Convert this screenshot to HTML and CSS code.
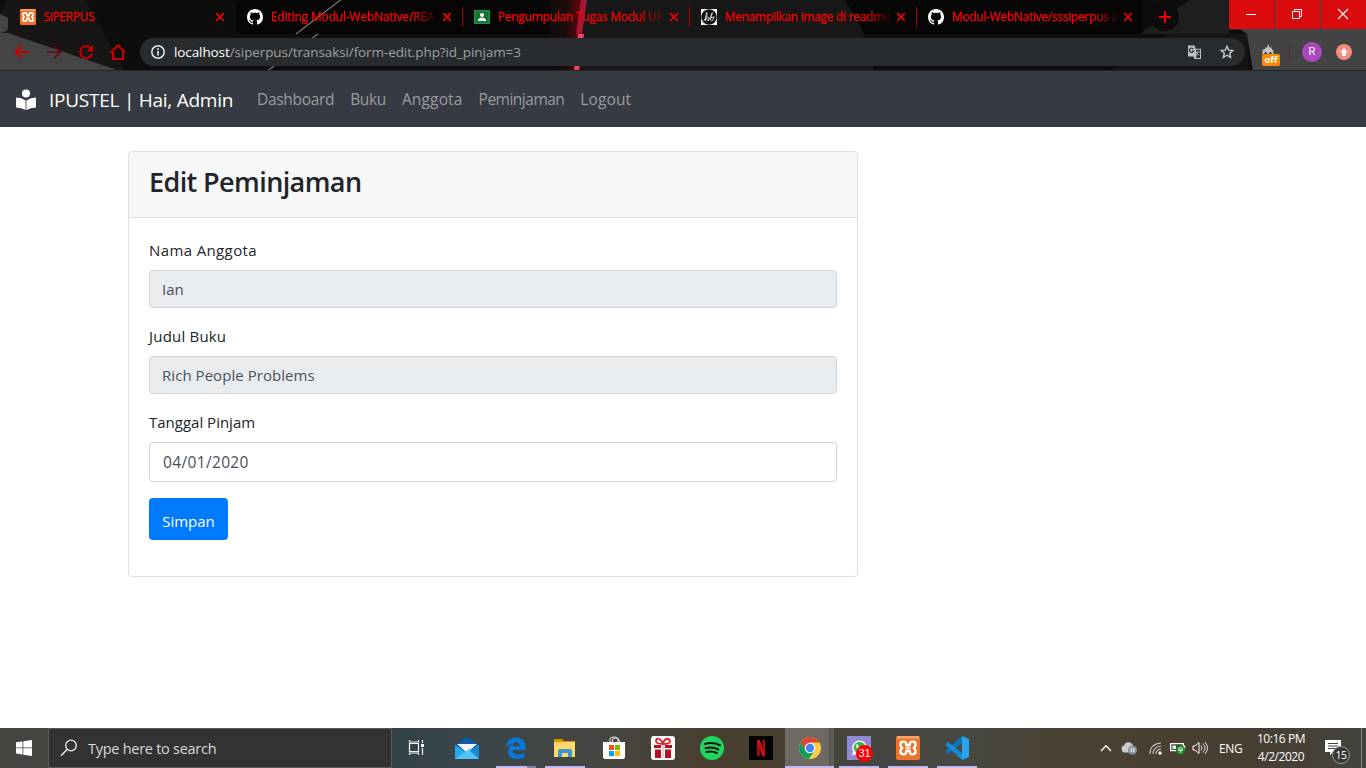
FILE: index.html
```html
<!DOCTYPE html>
<html lang="id">
<head>
<meta charset="utf-8">
<title>SiPERPUS</title>
<link rel="stylesheet" href="styles.css">
</head>
<body>
<svg class="defs" width="0" height="0">
  <defs>
    <symbol id="github" viewBox="0 0 16 16"><path fill="#fff" d="M8 0C3.58 0 0 3.58 0 8c0 3.54 2.29 6.53 5.47 7.59.4.07.55-.17.55-.38 0-.19-.01-.82-.01-1.49-2.01.37-2.53-.49-2.69-.94-.09-.23-.48-.94-.82-1.13-.28-.15-.68-.52-.01-.53.63-.01 1.08.58 1.23.82.72 1.21 1.87.87 2.33.66.07-.52.28-.87.51-1.07-1.78-.2-3.64-.89-3.64-3.95 0-.87.31-1.59.82-2.15-.08-.2-.36-1.02.08-2.12 0 0 .67-.21 2.2.82.64-.18 1.32-.27 2-.27s1.36.09 2 .27c1.53-1.04 2.2-.82 2.2-.82.44 1.1.16 1.92.08 2.12.51.56.82 1.27.82 2.15 0 3.07-1.87 3.75-3.65 3.95.29.25.54.73.54 1.48 0 1.07-.01 1.93-.01 2.2 0 .21.15.46.55.38A8.01 8.01 0 0 0 16 8c0-4.42-3.58-8-8-8z"/></symbol>
    <symbol id="xampp" viewBox="0 0 24 24"><rect width="24" height="24" rx="2" fill="#ed742a"/><path d="M1 0h22v2.500H1z" fill="#f7a46b"/><path d="M10.300 9.300H13.700V8.200Q13.700 5.800 16.200 5.800H17Q19.600 5.800 19.600 8.400 19.600 11 17.600 12 19.600 13 19.600 15.600 19.600 18.200 17 18.200H16.200Q13.700 18.200 13.700 15.800V14.700H10.300V15.800Q10.300 18.200 7.800 18.200H7Q4.400 18.200 4.400 15.600 4.400 13 6.400 12 4.400 11 4.400 8.400 4.400 5.800 7 5.800H7.800Q10.300 5.800 10.300 8.200z" fill="none" stroke="#fff" stroke-width="2.400" stroke-linejoin="round"/><path d="M9.500 12h5" stroke="#fff" stroke-width="1.600"/></symbol>
    <symbol id="cross" viewBox="0 0 10 10"><path d="M1.200 1.200l7.600 7.600M8.800 1.200L1.200 8.800" stroke="#f00000" stroke-width="1.700"/></symbol>
    <linearGradient id="beam"><stop offset="0" stop-color="#800" stop-opacity="0"/><stop offset=".55" stop-color="#800" stop-opacity=".12"/><stop offset="1" stop-color="#a00010" stop-opacity=".65"/></linearGradient>
  </defs>
</svg>

<header class="browser">
  <svg class="browser-art" width="1366" height="71" viewBox="0 0 1366 71">
    <path fill="#0d0d0d" d="M0 0h1366v71H0z"/>
    <path fill="#171614" d="M8 0H85L125 71H0V15z"/>
    <path fill="#050505" d="M236 8q0-8 8-8H550V34H244q-8 0-8-8z"/>
    <path fill="#171717" d="M586 0h268l20 71H578z"/>
    <path fill="#060606" d="M845 0h295q3 0 3 6v28H865z"/>
    <path fill="#282828" d="M1208 0h158v30H1143l5 3z"/>
    <path fill="#1e1e1e" d="M1190 0h39v34h-89z"/>
    <path fill="#151515" d="M1170 34h78v37H1110z"/>
    <path fill="#434343" d="M1229 0H1366V71H1253L1247 34 1240 29z"/>
    <path fill="#444" d="M0 14l8 4v10q0 4-8 5zM0 33h8l112 38H0z"/>
    <path d="M343-2L296 34M318 34L267 71" stroke="#777" stroke-width="1.200"/>
    <path fill="url(#beam)" d="M545 0h37l-5 71h-32z"/>
    <path fill="#a71632" d="M581 0h6l-5 34h-6z"/>
    <path fill="#f04663" d="M578 34h6l-5 37h-5z"/>
    <path d="M0 70.500H1366" stroke="#222326"/>
  </svg>

  <div class="tabstrip">
    <div class="tab"><svg class="fav"><use href="#xampp"/></svg><span class="tab-title t1">SiPERPUS</span><svg class="tab-close"><use href="#cross"/></svg></div>
    <div class="tab"><svg class="fav"><use href="#github"/></svg><span class="tab-title t2">Editing Modul-WebNative/REA</span><svg class="tab-close"><use href="#cross"/></svg></div>
    <div class="tab ruled"><svg class="fav" viewBox="0 0 16 16"><path fill="#1e8e3e" d="M0 1h16v14H0z"/><path fill="#137333" d="M1.500 2.500h13v11h-13z"/><circle cx="8" cy="6" r="2" fill="#fff"/><path fill="#fff" d="M4 12v-1.500q2-2 4-2t4 2V12z"/></svg><span class="tab-title t3">Pengumpulan Tugas Modul UK</span><svg class="tab-close"><use href="#cross"/></svg></div>
    <div class="tab ruled"><svg class="fav" viewBox="0 0 16 16"><path fill="#fff" d="M0 0h16v16H0z"/><circle cx="8" cy="8" r="7.800" fill="#111"/><path d="M2.500 12Q7 6 6 3.500 5 3 4.500 12 6.500 6 7.500 8.500L7 12Q10 8 11.500 4 10.500 2 9.500 11 10 13 12 11 13.500 8 10 8.500L14 8" fill="none" stroke="#ddd" stroke-width=".9"/></svg><span class="tab-title t4">Menampilkan image di readme</span><svg class="tab-close"><use href="#cross"/></svg></div>
    <div class="tab ruled"><svg class="fav"><use href="#github"/></svg><span class="tab-title t5">Modul-WebNative/sssiperpus a</span><svg class="tab-close"><use href="#cross"/></svg></div>
    <div class="new-tab"><svg width="12" height="12"><path d="M6 0v12M0 6h12" stroke="#f00000" stroke-width="2"/></svg></div>
    <div class="window-controls">
      <span><svg width="12" height="12"><path d="M1 6.500h10" stroke="#fff"/></svg></span>
      <span><svg width="12" height="12"><path d="M1.500 3.500h7v7h-7zM3.500 3.500v-2h7v7h-2" fill="none" stroke="#fff"/></svg></span>
      <span><svg width="12" height="12"><path d="M1 1l10 10M11 1L1 11" stroke="#fff" stroke-width="1.100"/></svg></span>
    </div>
  </div>

  <div class="toolbar">
    <svg width="16" height="16"><path d="M15 8H2M8 1.500L1.500 8 8 14.500" fill="none" stroke="#c80000" stroke-width="2"/></svg>
    <svg width="16" height="16"><path d="M1 8h13M8 1.500L14.500 8 8 14.500" fill="none" stroke="#650909" stroke-width="1.700"/></svg>
    <svg width="16" height="16"><path d="M12.800 4.200A6 6 0 1 0 14 9.800" fill="none" stroke="#c80000" stroke-width="2"/><path d="M15 1v6.500H8.500z" fill="#c80000"/></svg>
    <svg width="16" height="16"><path d="M.8 8.500L8 1.500l7.200 7M3 7.500V15h10V7.500" fill="none" stroke="#c80000" stroke-width="2"/></svg>
    <div class="address">
      <svg width="14" height="14"><circle cx="7" cy="7" r="6.200" fill="none" stroke="#e8eaed" stroke-width="1.500"/><path d="M7 6v4.500M7 3.300v1.600" stroke="#e8eaed" stroke-width="1.600"/></svg>
      <span class="url"><b>localhost</b>/siperpus/transaksi/form-edit.php?id_pinjam=3</span>
      <svg class="translate" width="15" height="15"><path fill="#bdc1c6" d="M1 .5h6.500l1.200 3.200H14V14H7.500L6.400 11.500H1z"/><path fill="#292c2f" d="M8.900 4.800H13v8.100H9.600l-1-1.400h1.200z"/><path d="M6.400 4A2.200 2.200 0 1 0 6.600 6H4.800" fill="none" stroke="#292c2f" stroke-width="1.200"/><path d="M9.200 7h3.500M11 6v1Q10.800 9 9.300 10M9.500 7.500l2.800 3.300" fill="none" stroke="#bdc1c6" stroke-width=".8"/></svg>
      <svg class="star" width="14" height="14"><path d="M7 1.300l1.700 3.800 4.100.4-3.100 2.700.9 4.100L7 10.200l-3.600 2.100.9-4.100L1.200 5.500l4.100-.4z" fill="none" stroke="#c8cbd0" stroke-width="1.400"/></svg>
    </div>
    <div class="extension"><svg width="14" height="14"><path fill="#c3c3c3" d="M1 10l1-3-1-1 3-1 .5-2L6 4l1-4 2 4 1.500-1L11 6l2 .5-1 1.500 1 2z"/><path d="M3 10l1.500-2.500L6.500 10m1 0l2-2.500L11 10" fill="#333"/></svg><span class="ext-badge">off</span></div>
    <i class="toolbar-rule"></i>
    <span class="avatar">R</span>
    <svg class="update" width="16" height="16"><circle cx="8" cy="8" r="8" fill="#f28b82"/><path fill="#fff" d="M8 4l4 4.300H9.800V12H6.200V8.300H4z"/></svg>
  </div>
</header>

<nav class="navbar">
  <svg class="brand-icon" width="22" height="22" viewBox="0 0 22 22"><circle cx="11" cy="4.500" r="4" fill="#fff"/><path fill="#fff" d="M1 8.500q5.500.2 9.600 3v9.600Q6.500 18.700 1 18.500zM21 8.500q-5.500.2-9.600 3v9.600q4.100-2.400 9.600-2.600z"/></svg>
  <span class="brand">IPUSTEL | Hai, Admin</span>
  <span class="link n1">Dashboard</span><span class="link n2">Buku</span><span class="link n3">Anggota</span><span class="link n4">Peminjaman</span><span class="link n5">Logout</span>
</nav>

<main class="page">
  <section class="card">
    <div class="card-header"><h3>Edit Peminjaman</h3></div>
    <form class="card-body">
      <label class="l1">Nama Anggota</label>
      <div class="control disabled">Ian</div>
      <label class="l2">Judul Buku</label>
      <div class="control disabled">Rich People Problems</div>
      <label class="l3">Tanggal Pinjam</label>
      <div class="control date">04/01/2020</div>
      <button type="button" class="save">Simpan</button>
    </form>
  </section>
</main>

<footer class="taskbar">
  <div class="start"><svg width="16" height="16"><path fill="#fff" d="M0 2.300l6.500-.9v6.100H0zM7.300 1.300L16 0v7.500H7.300zM0 8.300h6.500v6.200L0 13.600zM7.300 8.300H16V16l-8.700-1.300z"/></svg></div>
  <div class="search"><svg width="18" height="18"><circle cx="11" cy="6.500" r="5.300" fill="none" stroke="#eee" stroke-width="1.300"/><path d="M7.300 10.300L1 16.700" stroke="#eee" stroke-width="1.400"/></svg><span>Type here to search</span></div>
  <div class="apps">
    <div class="app task-view"><svg width="18" height="18"><path d="M2.500 4.500h9v8h-9zM2.500 1v2h9V1M2.500 16v-2h9v2M15.500 1v3M15.500 9v7" fill="none" stroke="#f5f5f5" stroke-width="1.200"/><path fill="#fff" d="M14 5h3v3h-3z"/></svg></div>
    <div class="app"><svg width="24" height="24"><path fill="#0b5ba9" d="M0 9L12 1l12 8-3 8H3z"/><path fill="#f3f3f3" d="M2 8h20L12 17z"/><path fill="#28a8ea" d="M0 9l12 8 12-8v14H0z"/><path fill="#50c5fa" d="M0 23L15 12.500 24 23z"/><path fill="#1789d6" d="M24 9l-9 6 9 8z"/></svg></div>
    <div class="app open edge"><svg width="22" height="24" viewBox="0 0 22 24"><path fill="#0a78d6" d="M1 11Q2 1.500 11.500 1.500 20.500 1.500 20.500 11.500V14H7.500Q8 18.500 13 18.500q3.500 0 6.500-1.800v4.500Q16 23 12 23 3 23 3 15.500 3 10 8.500 7.500 5 7.800 1 11zm6.500-.8h7Q14.500 6 11.200 6 8 6 7.500 10.200z"/></svg></div>
    <div class="app open"><svg width="22" height="22"><path fill="#d99600" d="M0 2h8l2 2h11v4H0z"/><path fill="#ffd766" d="M0 5h21v15H0z"/><path fill="#3f95d8" d="M4 20v-6q0-2 2-2h10q2 0 2 2v6h-4v-4H8v4z"/></svg></div>
    <div class="app"><svg width="24" height="24"><path d="M8 6V4q0-3 4-3t4 3v2M10.500 6V4q0-2 3-2t4 3v1" fill="none" stroke="#ddd" stroke-width="1.100"/><path fill="#fff" d="M1 6h22v15q0 2-2 2H3q-2 0-2-2z"/><path fill="#f25022" d="M7 9h5v5H7z"/><path fill="#7fba00" d="M13 9h5v5h-5z"/><path fill="#00a4ef" d="M7 15h5v5H7z"/><path fill="#ffb900" d="M13 15h5v5h-5z"/></svg></div>
    <div class="app"><svg width="24" height="24"><rect width="24" height="24" rx="3" fill="#fff"/><path d="M12 8Q5 8 5 5t3-2q3 1 4 5Q13 3 16 3q3 0 3 2.500T12 8z" fill="none" stroke="#e0202b" stroke-width="1.800"/><path fill="#b80f20" d="M3 9h7v3H3zM14 9h7v3h-7zM4 13.500h6V22H4zM14 13.500h6V22h-6z"/><path fill="#d8d8d8" d="M11 9h2v13h-2z"/></svg></div>
    <div class="app"><svg width="24" height="24"><circle cx="12" cy="12" r="12" fill="#1ed760"/><path d="M5 8q8-2.400 15 1.300M5.600 12.200q7-2 12.600 1.200M6.300 16q5.500-1.500 10.500 1" fill="none" stroke="#111" stroke-width="2.100" stroke-linecap="round"/></svg></div>
    <div class="app"><svg width="24" height="24"><path d="M0 0h24v24H0z"/><path fill="#a70b14" d="M8 4h2.800v16L8 20.300zM13.500 4H16v16.300l-2.500-.3z"/><path fill="#e50914" d="M8 4h2.800L16 20.300l-2.700-.3z"/></svg></div>
    <div class="app open active"><svg width="22" height="22" viewBox="0 0 22 22"><circle cx="11" cy="11" r="11" fill="#ffcd41"/><path fill="#db4437" d="M1.500 5.500A11 11 0 0 1 20.500 5.500H11L6.200 13.500z"/><path fill="#109d59" d="M1.500 5.500A11 11 0 0 0 9.700 21.900L15.500 14 8 15.500z"/><circle cx="11" cy="11" r="5.300" fill="#fff"/><circle cx="11" cy="11" r="4.200" fill="#4285f4"/></svg></div>
    <div class="app open whatsapp"><svg width="24" height="24"><path fill="#908ad5" d="M0 0h24v24H0z"/><path fill="#f5f5f5" d="M5 19.500l1-4.300a7.300 7.300 0 1 1 3 3z"/><circle cx="12.500" cy="11.500" r="5.700" fill="#35b747"/><path d="M10 8.500q0 5 5.500 6" stroke="#fff" stroke-width="2" fill="none"/></svg><span class="count">31</span></div>
    <div class="app open"><svg width="24" height="24"><use href="#xampp"/></svg></div>
    <div class="app open"><svg width="24" height="24"><path fill="#0879bf" d="M0 15.500L17 0v7L3 18z"/><path fill="#168ed5" d="M0 8.500L3 6l14 11v7z"/><path fill="#29a4ef" d="M17 0l7 3v18l-7 3z"/></svg></div>
  </div>
  <div class="tray">
    <svg width="12" height="8"><path d="M1 7l5-5.300L11 7" fill="none" stroke="#fff" stroke-width="1.300"/></svg>
    <svg class="cloud" width="16" height="14"><path fill="#ccc" d="M1 9Q-.5 5 3 4.500 5 0 9 1.500q3 1 3 4l2 4-5 2H3Q1 11 1 9z"/><circle cx="11.500" cy="9" r="4.500" fill="#8b94a3"/><path d="M10.200 7v4M12.800 7v4" stroke="#fff"/></svg>
    <svg class="wifi" width="13" height="13"><path d="M1 12Q1 2 12 1M4 12q0-7 8-8M7 12q0-4.500 5-5" fill="none" stroke="#ccc" stroke-width="1.100"/><circle cx="11" cy="11" r="1.700" fill="#fff"/></svg>
    <svg class="battery" width="16" height="14"><path d="M.7 2.700h12.600v7H.7zM14.500 4.500v3.500" fill="none" stroke="#fff" stroke-width="1.300"/><path fill="#eee" d="M2.500 4.500H6V8H2.500z"/><circle cx="10.500" cy="9" r="4.700" fill="#138a28"/><path d="M10.500 12V8.500M8.700 9.500Q8 6.500 10.500 6.500t1.800 3z" fill="none" stroke="#fff"/></svg>
    <svg class="sound" width="17" height="14"><path d="M1 5h2l4-3.500v11L3 9H1z" fill="none" stroke="#fff"/><path d="M9 4.500q2 2.500 0 5M11 2.500q4 4.500 0 9M13 1q5 6 0 12" fill="none" stroke="#ddd"/></svg>
    <span class="lang">ENG</span>
    <div class="clock"><span class="time">10:16 PM</span><span class="day">4/2/2020</span></div>
    <div class="notify"><svg width="17" height="16"><path fill="#fff" d="M0 0h16v12H8l-3 3v-3H0z"/><path d="M3 3.500h10M3 6h10M3 8.500h7" stroke="#444"/></svg><span class="notify-count">15</span></div>
    <i class="desktop-edge"></i>
  </div>
</footer>
</body>
</html>
```

FILE: styles.css
```css
* { box-sizing: border-box; }
body { margin: 0; width: 1366px; height: 768px; display: flex; flex-direction: column; overflow: hidden; background: #fff; font-family: "Open Sans", "Noto Sans", sans-serif; }
.defs { position: absolute; }
svg { flex: none; display: block; }

/* browser frame */
.browser { position: relative; height: 71px; flex: none; }
.browser-art { position: absolute; inset: 0; }
.tabstrip { position: relative; height: 34px; display: flex; padding-left: 8px; }
.tab { width: 227px; flex: none; display: flex; align-items: center; padding: 0 10px 0 12px; }
.ruled { background: linear-gradient(#a00, #a00) left center / 1px 20px no-repeat; }
.fav { width: 16px; height: 16px; }
.tab-title { flex: 1; min-width: 0; margin-left: 8px; white-space: nowrap; color: #ff0000; font-size: 12px; line-height: 18px; -webkit-text-stroke: .3px #ff0000; -webkit-mask-image: linear-gradient(90deg, #000 142px, transparent 168px); mask-image: linear-gradient(90deg, #000 142px, transparent 168px); }
.t1 { letter-spacing: -.35px; }
.t2 { letter-spacing: -.17px; }
.t3 { letter-spacing: -.25px; }
.t4 { letter-spacing: -.3px; }
.t5 { letter-spacing: -.3px; }
.tab-close { width: 10px; height: 10px; margin-left: 6px; }
.new-tab { width: 28px; height: 28px; margin: 3px 0 0 8px; border-radius: 50%; background: #0b0b0b; display: flex; align-items: center; justify-content: center; }
.window-controls { display: flex; gap: 1px; margin-left: auto; height: 29px; }
.window-controls span { width: 45px; padding: 0 1px 1px 0; background: #da0b0d; display: flex; align-items: center; justify-content: center; }
.toolbar { position: relative; height: 36px; padding-left: 14px; display: flex; align-items: center; gap: 16px; }
.address { width: 1105px; height: 28px; margin-left: -2px; padding: 0 11px; border-radius: 14px; background: #292c2f; display: flex; align-items: center; }
.url { margin-left: 9px; color: #9aa0a6; font-size: 13.500px; letter-spacing: -.1px; white-space: nowrap; }
.url b { font-weight: 400; color: #fff; }
.translate { margin-left: auto; }
.star { margin-left: 18px; }
.extension { position: relative; width: 20px; height: 26px; margin-left: -1px; display: flex; justify-content: center; }
.extension svg { margin: 5px 4px 0 0; }
.ext-badge { position: absolute; left: 2px; bottom: -1px; width: 18px; height: 12px; border-radius: 2px; background: #ff8a00; color: #fff; font: 700 9.500px/12px "Open Sans", sans-serif; text-align: center; }
.toolbar-rule { width: 1px; height: 16px; background: #5a2c2c; margin-left: -7px; }
.avatar { width: 20px; height: 20px; border-radius: 50%; background: #ab47bc; color: #fff; font: 11px/20px Roboto, sans-serif; text-align: center; margin-left: -4px; }
.update { margin-left: -2px; }

/* site navigation */
.navbar { height: 56px; flex: none; display: flex; align-items: center; padding-left: 15px; background: #363a42; }
.brand-icon { margin-top: 2px; }
.brand { width: 184px; margin: 2px 16px 0 12px; font-size: 19px; line-height: 30px; color: #fff; white-space: nowrap; letter-spacing: -.25px; }
.link { padding: 0 8px; font-size: 15.500px; line-height: 24px; color: #9a9c9f; }
.n1 { letter-spacing: -.32px; }
.n2 { letter-spacing: -.35px; }
.n3 { letter-spacing: .15px; }
.n4 { letter-spacing: -.5px; }
.n5 { letter-spacing: .1px; }

/* edit form */
.page { flex: 1; padding: 24px 0 0 128px; }
.card { width: 730px; height: 426px; border: 1px solid #dfdfdf; border-radius: 4px; }
.card-header { height: 66px; padding: 13px 20px; border-bottom: 1px solid #dfdfdf; border-radius: 3px 3px 0 0; background: #f7f7f7; }
h3 { margin: 0; font-size: 27px; line-height: 34px; font-weight: 600; color: #212529; letter-spacing: -.6px; }
.card-body { display: flex; flex-direction: column; padding: 20px; }
label { height: 24px; margin-bottom: 8px; color: #212529; font-size: 15px; line-height: 24px; }
.l1 { letter-spacing: .38px; }
.l2 { letter-spacing: .2px; }
.control { height: 38px; margin-bottom: 16px; padding: 0 12px; border: 1px solid #ced4da; border-radius: 4px; background: #fff; color: #495057; font-size: 15px; line-height: 37px; letter-spacing: .05px; }
.disabled { background: #e9ecef; }
.date { height: 40px; padding-left: 13px; line-height: 39px; font-size: 15.500px; letter-spacing: .35px; }
.save { width: 79px; height: 42px; padding: 3px 0 0; border: 0; border-radius: 4px; background: #007bff; color: #fff; font: 15px/24px "Open Sans", sans-serif; }

/* desktop taskbar */
.taskbar { height: 40px; flex: none; display: flex; color: #fff; background: linear-gradient(90deg, #454541 0, #454541 50px, #314047 390px, #39454a 460px, #454641 600px, #493f31 710px, #493f31 780px, #454641 880px, #474842 960px, #494131 1080px, #483e31 1240px, #43433d 1366px); }
.start { width: 48px; display: flex; align-items: center; justify-content: center; }
.search { width: 344px; display: flex; align-items: center; padding-left: 11px; border: 1px solid #5b5b5b; background: #323232; color: #d9d9d9; font-size: 14.500px; }
.search span { margin-left: 10px; letter-spacing: -.27px; }
.apps { display: flex; }
.app { width: 49px; display: flex; align-items: center; justify-content: center; position: relative; }
.task-view { width: 50px; padding-right: 3px; }
.open { background: linear-gradient(#c2b9f5, #c2b9f5) center bottom / 40px 2px no-repeat; }
.edge { background: linear-gradient(90deg, #c2b9f5 31px, #8580a1 31px) center bottom / 40px 2px no-repeat; }
.active { background: linear-gradient(#c2b9f5, #c2b9f5) center bottom / 49px 2px no-repeat, linear-gradient(90deg, #6b6961 44px, #4c4c49 44px, #5d5d59 46px); }
.count { position: absolute; left: 22px; top: 17px; width: 17px; height: 17px; border-radius: 50%; background: #f00; font: 11px/17px "Liberation Sans", sans-serif; text-align: center; }
.tray { margin-left: auto; display: flex; align-items: center; font-size: 12px; }
.cloud { margin-left: 9px; }
.wifi { margin-left: 12px; }
.battery { margin-left: 8px; }
.sound { margin-left: 6px; }
.lang { width: 24px; margin-left: 10px; letter-spacing: -.3px; }
.clock { width: 58px; margin-left: 9px; display: flex; flex-direction: column; align-items: center; line-height: 18px; white-space: nowrap; letter-spacing: -.45px; }
.notify { position: relative; width: 26px; margin-left: 15px; height: 17px; }
.notify-count { position: absolute; left: 7px; top: 6px; width: 18px; height: 18px; border: 1px solid #999; border-radius: 50%; background: #383936; font-size: 10.500px; line-height: 16px; text-align: center; letter-spacing: -.4px; }
.desktop-edge { width: 5px; height: 40px; margin-left: 10px; border-left: 1px solid #85857f; }
```
